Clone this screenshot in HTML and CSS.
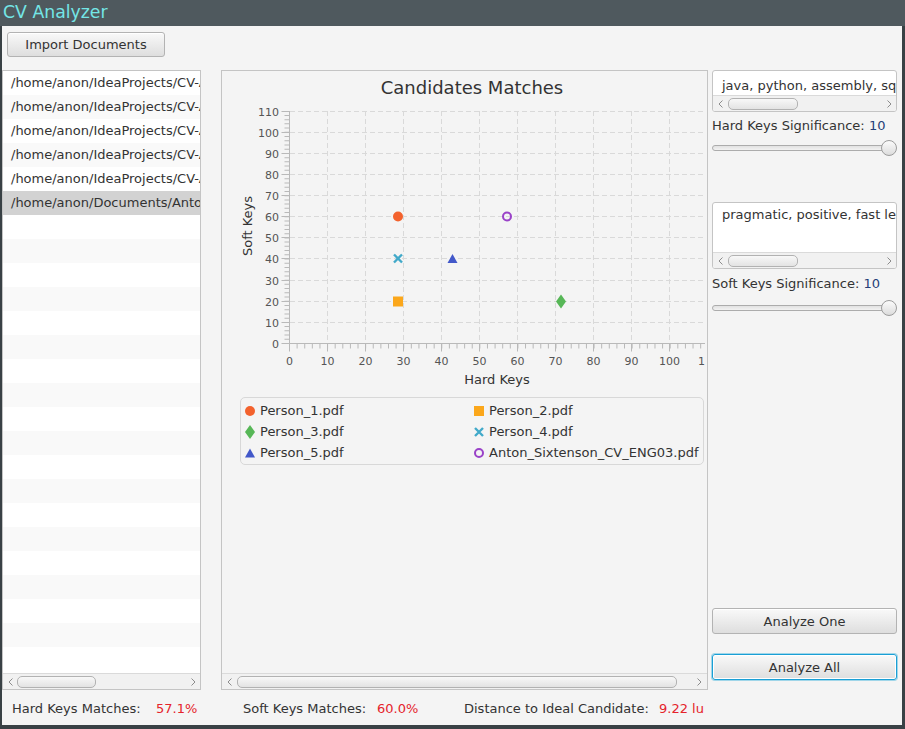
FILE: index.html
```html
<!DOCTYPE html>
<html>
<head>
<meta charset="utf-8">
<title>CV Analyzer</title>
<link rel="stylesheet" href="styles.css">
</head>
<body>
<div class="titlebar">CV Analyzer</div>
<div class="window">
  <div class="toolbar"><button class="btn btn-import">Import Documents</button></div>
  <div class="main">
    <div class="list">
      <div class="rows">
        <div class="row">/home/anon/IdeaProjects/CV-Analyzer/Person_1.pdf</div>
        <div class="row">/home/anon/IdeaProjects/CV-Analyzer/Person_2.pdf</div>
        <div class="row">/home/anon/IdeaProjects/CV-Analyzer/Person_3.pdf</div>
        <div class="row">/home/anon/IdeaProjects/CV-Analyzer/Person_4.pdf</div>
        <div class="row">/home/anon/IdeaProjects/CV-Analyzer/Person_5.pdf</div>
        <div class="row selected">/home/anon/Documents/Anton_Sixtenson_CV_ENG03.pdf</div>
        <div class="row"></div><div class="row"></div><div class="row"></div><div class="row"></div>
        <div class="row"></div><div class="row"></div><div class="row"></div><div class="row"></div>
        <div class="row"></div><div class="row"></div><div class="row"></div><div class="row"></div>
        <div class="row"></div><div class="row"></div><div class="row"></div><div class="row"></div>
        <div class="row"></div><div class="row"></div><div class="row"></div>
      </div>
      <div class="hscroll">
        <span class="arrow"><svg width="5" height="8"><path d="M4.5 0.5 L1 4 L4.5 7.5" fill="none" stroke="#8c8c8c"/></svg></span>
        <span class="thumb thumb-list"></span>
        <span class="arrow arrow-right"><svg width="5" height="8"><path d="M0.5 0.5 L4 4 L0.5 7.5" fill="none" stroke="#8c8c8c"/></svg></span>
      </div>
    </div>

    <div class="chart-panel">
      <div class="chart-viewport">
        <div class="chart">
          <div class="chart-title">Candidates Matches</div>
          <svg class="plot" width="500" height="290" viewBox="0 0 500 290">
            <g class="grid" stroke="#d9d9d9" stroke-width="1" stroke-dasharray="5 3" fill="none">
              <path d="M68 222.5H500 M68 201.5H500 M68 180.5H500 M68 158.5H500 M68 137.5H500 M68 116.5H500 M68 95.5H500 M68 74.5H500 M68 53.5H500 M68 32.5H500 M68 11.5H500"/>
              <path d="M105.5 11V243 M143.5 11V243 M181.5 11V243 M219.5 11V243 M257.5 11V243 M295.5 11V243 M333.5 11V243 M371.5 11V243 M409.5 11V243 M447.5 11V243 M485.5 11V243"/>
            </g>
            <g stroke="#b9b9b9" fill="none">
              <path d="M67.5 11V243.5 M67.5 243.5H500"/>
              <path d="M59.5 243.5H67.5 M59.5 222.5H67.5 M59.5 201.5H67.5 M59.5 180.5H67.5 M59.5 158.5H67.5 M59.5 137.5H67.5 M59.5 116.5H67.5 M59.5 95.5H67.5 M59.5 74.5H67.5 M59.5 53.5H67.5 M59.5 32.5H67.5 M59.5 11.5H67.5"/>
              <path d="M67.5 243.5V251.5 M105.5 243.5V251.5 M143.5 243.5V251.5 M181.5 243.5V251.5 M219.5 243.5V251.5 M257.5 243.5V251.5 M295.5 243.5V251.5 M333.5 243.5V251.5 M371.5 243.5V251.5 M409.5 243.5V251.5 M447.5 243.5V251.5 M485.5 243.5V251.5"/>
              <line x1="65" y1="244" x2="65" y2="11" stroke-width="5" stroke-dasharray="1 3.224"/>
              <line x1="67" y1="246" x2="500" y2="246" stroke-width="5" stroke-dasharray="1 6.614"/>
            </g>
            <g class="ticks-y" text-anchor="end">
              <text x="57" y="247.5">0</text>
              <text x="57" y="226.5">10</text>
              <text x="57" y="205.5">20</text>
              <text x="57" y="184.5">30</text>
              <text x="57" y="162.5">40</text>
              <text x="57" y="141.5">50</text>
              <text x="57" y="120.5">60</text>
              <text x="57" y="99.5">70</text>
              <text x="57" y="78.5">80</text>
              <text x="57" y="57.5">90</text>
              <text x="57" y="36.5">100</text>
              <text x="57" y="15.5">110</text>
            </g>
            <g class="ticks-x" text-anchor="middle">
              <text x="67.5" y="265">0</text>
              <text x="105.5" y="265">10</text>
              <text x="143.5" y="265">20</text>
              <text x="181.5" y="265">30</text>
              <text x="219.5" y="265">40</text>
              <text x="257.5" y="265">50</text>
              <text x="295.5" y="265">60</text>
              <text x="333.5" y="265">70</text>
              <text x="371.5" y="265">80</text>
              <text x="409.5" y="265">90</text>
              <text x="447.5" y="265">100</text>
              <text x="486.5" y="265">110</text>
            </g>
            <text class="axis-title" x="275" y="284" text-anchor="middle">Hard Keys</text>
            <text class="axis-title" transform="translate(30 126) rotate(-90)" text-anchor="middle">Soft Keys</text>

            <circle cx="176" cy="116.5" r="5" fill="#f3622d"/>
            <rect x="171" y="196.5" width="10" height="10" fill="#fba71b"/>
            <path d="M339 194.5 L344 201.5 L339 208.5 L334 201.5 Z" fill="#57b757"/>
            <path d="M172 154.5 L180 162.5 M180 154.5 L172 162.5" stroke="#41a9c9" stroke-width="2.4" fill="none"/>
            <path d="M230.5 154 L235.5 163 L225.5 163 Z" fill="#4258c9"/>
            <circle cx="285" cy="116.5" r="4" fill="none" stroke="#9a42c8" stroke-width="2"/>
          </svg>
          <div class="legend">
            <div class="legend-item"><svg width="10" height="12" viewBox="0 0 10 12"><circle cx="5" cy="6" r="5" fill="#f3622d"/></svg>Person_1.pdf</div>
            <div class="legend-item"><svg width="10" height="12" viewBox="0 0 10 12"><rect x="0" y="1" width="10" height="10" fill="#fba71b"/></svg>Person_2.pdf</div>
            <div class="legend-item"><svg width="10" height="14" viewBox="0 0 10 14"><path d="M5 0 L10 7 L5 14 L0 7 Z" fill="#57b757"/></svg>Person_3.pdf</div>
            <div class="legend-item"><svg width="10" height="12" viewBox="0 0 10 12"><path d="M1 2 L9 10 M9 2 L1 10" stroke="#41a9c9" stroke-width="2.4" fill="none"/></svg>Person_4.pdf</div>
            <div class="legend-item"><svg width="10" height="12" viewBox="0 0 10 12"><path d="M5 1.5 L10 10.5 L0 10.5 Z" fill="#4258c9"/></svg>Person_5.pdf</div>
            <div class="legend-item"><svg width="10" height="12" viewBox="0 0 10 12"><circle cx="5" cy="6" r="4" fill="none" stroke="#9a42c8" stroke-width="2"/></svg>Anton_Sixtenson_CV_ENG03.pdf</div>
          </div>
        </div>
      </div>
      <div class="hscroll">
        <span class="arrow"><svg width="5" height="8"><path d="M4.5 0.5 L1 4 L4.5 7.5" fill="none" stroke="#8c8c8c"/></svg></span>
        <span class="thumb thumb-chart"></span>
        <span class="arrow arrow-right arrow-wide"><svg width="5" height="8"><path d="M0.5 0.5 L4 4 L0.5 7.5" fill="none" stroke="#8c8c8c"/></svg></span>
      </div>
    </div>

    <div class="side">
      <div class="textarea ta1">
        <div class="ta-text">java, python, assembly, sql, c++</div>
        <div class="hscroll">
          <span class="arrow"><svg width="5" height="8"><path d="M4.5 0.5 L1 4 L4.5 7.5" fill="none" stroke="#8c8c8c"/></svg></span>
          <span class="thumb thumb-ta"></span>
          <span class="arrow arrow-right"><svg width="5" height="8"><path d="M0.5 0.5 L4 4 L0.5 7.5" fill="none" stroke="#8c8c8c"/></svg></span>
        </div>
      </div>
      <div class="sig sig1">Hard Keys Significance: <span class="num">10</span></div>
      <div class="slider slider1"><span class="track"></span><span class="knob"></span></div>

      <div class="textarea ta2">
        <div class="ta-text">pragmatic, positive, fast learner</div>
        <div class="hscroll">
          <span class="arrow"><svg width="5" height="8"><path d="M4.5 0.5 L1 4 L4.5 7.5" fill="none" stroke="#8c8c8c"/></svg></span>
          <span class="thumb thumb-ta"></span>
          <span class="arrow arrow-right"><svg width="5" height="8"><path d="M0.5 0.5 L4 4 L0.5 7.5" fill="none" stroke="#8c8c8c"/></svg></span>
        </div>
      </div>
      <div class="sig sig2">Soft Keys Significance: <span class="num">10</span></div>
      <div class="slider slider2"><span class="track"></span><span class="knob"></span></div>

      <div class="spacer"></div>
      <button class="btn btn-side">Analyze One</button>
      <button class="btn btn-side btn-focus">Analyze All</button>
    </div>
  </div>
  <div class="status">
    <div class="stat stat1"><span class="stat-label l1">Hard Keys Matches:</span><span class="val">57.1%</span></div>
    <div class="stat stat2"><span class="stat-label l2">Soft Keys Matches:</span><span class="val">60.0%</span></div>
    <div class="stat stat3"><span class="stat-label l3">Distance to Ideal Candidate:</span><span class="val">9.22 lu</span></div>
  </div>
</div>
</body>
</html>
```

FILE: styles.css
```css
* { box-sizing: border-box; }

body {
  margin: 0;
  width: 905px;
  height: 729px;
  overflow: hidden;
  background: #394145;
  font-family: "DejaVu Sans", "Noto Sans", sans-serif;
  font-size: 13px;
  color: #333;
}

.titlebar {
  height: 26px;
  background: #4f595e;
  color: #74e6e6;
  font-size: 17.3px;
  line-height: 25px;
  padding-left: 3px;
}

.window {
  margin-left: 2px;
  width: 900px;
  height: 699px;
  background: #f4f4f4;
  display: flex;
  flex-direction: column;
}

.toolbar {
  height: 44px;
  padding: 6px 0 0 5px;
}

.btn {
  font-family: "DejaVu Sans", sans-serif;
  font-size: 13px;
  color: #333;
  border: 1px solid #b3b3b3;
  border-radius: 3px;
  background: linear-gradient(#f9f9f9, #dedede);
  box-shadow: inset 0 1px 0 #ffffff;
  padding: 0;
}

.btn-import {
  width: 158px;
  height: 25px;
}

.main {
  display: flex;
  height: 620px;
}

/* list */
.list {
  width: 199px;
  border: 1px solid #c4c4c4;
  background: #fff;
  display: flex;
  flex-direction: column;
  overflow: hidden;
}

.rows {
  flex: 1;
  overflow: hidden;
}

.row {
  height: 24px;
  line-height: 24px;
  padding-left: 8px;
  white-space: nowrap;
  overflow: hidden;
}

.row:nth-child(even) { background: #f9f9f9; }
.row.selected { background: #d2d2d2; }

/* scrollbars */
.hscroll {
  flex: none;
  height: 16px;
  display: flex;
  align-items: center;
  background: #f1f1f1;
  border-top: 1px solid #dadada;
}

.arrow {
  width: 14px;
  height: 15px;
  display: flex;
  align-items: center;
  justify-content: center;
  flex: none;
}

.arrow svg { display: block; }

.arrow-right { margin-left: auto; }
.arrow-wide { width: 16px; }

.thumb {
  height: 12px;
  border: 1px solid #b2b2b2;
  border-radius: 5px;
  background: linear-gradient(#f8f8f8, #e3e3e3);
  flex: none;
}

.thumb-list { width: 79px; }
.thumb-chart { width: 440px; margin-left: 1px; }
.thumb-ta { width: 70px; margin-left: 1px; }

/* chart */
.chart-panel {
  margin-left: 20px;
  width: 487px;
  border: 1px solid #c4c4c4;
  background: #f4f4f4;
  display: flex;
  flex-direction: column;
}

.chart-viewport {
  flex: 1;
  overflow: hidden;
  margin-right: 2px;
}

.chart { width: 500px; }

.chart-title {
  margin-top: 5px;
  height: 24px;
  line-height: 24px;
  text-align: center;
  font-size: 18px;
  color: #333;
}

.plot {
  display: block;
  font-family: "DejaVu Sans", sans-serif;
}

.ticks-y text, .ticks-x text {
  font-size: 11px;
  fill: #555;
}

.axis-title {
  font-size: 13px;
  fill: #333;
}

.legend {
  margin: 7px 18px 0;
  border: 1px solid #d8d8d8;
  border-radius: 5px;
  display: grid;
  grid-template-columns: 229px 1fr;
  padding: 2px 4px 1px 4px;
}

.legend-item {
  height: 21px;
  display: flex;
  align-items: center;
  gap: 5px;
  white-space: nowrap;
}

.legend-item svg { display: block; flex: none; }

/* side */
.side {
  margin-left: 4px;
  width: 185px;
  display: flex;
  flex-direction: column;
  padding-bottom: 10px;
}

.textarea {
  background: #fff;
  border: 1px solid #c4c4c4;
  border-radius: 3px;
  overflow: hidden;
  display: flex;
  flex-direction: column;
}

.ta-text {
  flex: 1;
  padding-left: 9px;
  line-height: 16px;
  white-space: nowrap;
  overflow: hidden;
}

.ta1 { height: 42px; }
.ta1 .ta-text { padding-top: 7px; }

.ta2 { height: 67px; margin-top: 46px; }
.ta2 .ta-text { padding-top: 4px; }

.sig {
  height: 16px;
  line-height: 16px;
  white-space: nowrap;
}

.sig1 { margin-top: 6px; }
.sig2 { margin-top: 7px; }

.num { color: #253f78; }

.slider {
  height: 16px;
  display: flex;
  align-items: center;
}

.slider1 { margin-top: 6px; }
.slider2 { margin-top: 8px; }

.track {
  flex: 1;
  height: 6px;
  border: 1px solid #acacac;
  border-radius: 3px;
  background: linear-gradient(#e2e2e2, #f2f2f2);
}

.knob {
  width: 16px;
  height: 16px;
  margin-left: -8px;
  border: 1px solid #9c9c9c;
  border-radius: 50%;
  background: linear-gradient(#fbfbfb, #dcdcdc);
  flex: none;
}

.spacer { flex: 1; }

.btn-side {
  width: 185px;
  height: 26px;
}

.btn-focus {
  margin-top: 20px;
  border-color: #1a9fd5;
  box-shadow: 0 0 0 1px rgba(3, 158, 211, 0.35), inset 0 0 0 1px #ffffff;
}

/* status */
.status {
  flex: 1;
  display: flex;
  padding: 11px 0 0 10px;
  line-height: 16px;
  white-space: nowrap;
}

.stat { display: flex; }
.stat1 { width: 231px; }
.stat2 { width: 221px; }

.stat-label { display: inline-block; }
.l1 { width: 144px; }
.l2 { width: 134px; }
.l3 { width: 195px; }

.val { color: #e5232b; }
```
